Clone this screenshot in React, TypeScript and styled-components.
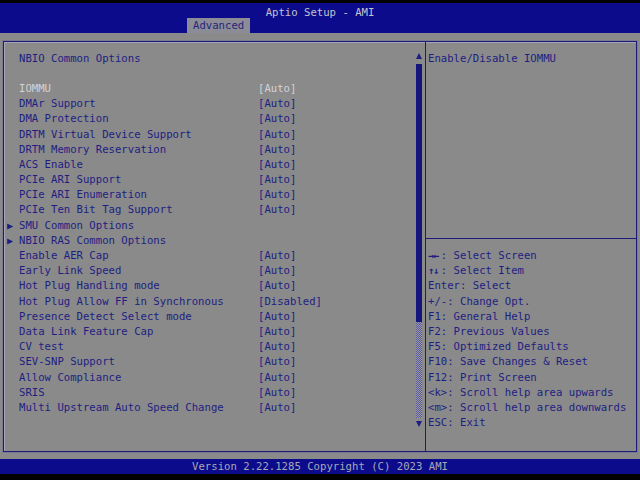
import React from "react";
import styled, { createGlobalStyle } from "styled-components";

const BLUE = "#0b0b8c";
const GRAY = "#8a8a8a";
const TEXT = "#1e1e82";
const LH = "15.2px";

const Global = createGlobalStyle`
  html, body { margin: 0; padding: 0; background: #000; }
  body { width: 640px; height: 480px; overflow: hidden; }
  * { box-sizing: border-box; }
`;

const Screen = styled.div`
  width: 640px;
  height: 480px;
  display: flex;
  flex-direction: column;
  background: #000;
  font-family: "DejaVu Sans Mono", "Liberation Mono", monospace;
  font-size: 10.63px;
  line-height: ${LH};
  color: ${TEXT};
`;

const Header = styled.div`
  margin-top: 3px;
  height: 30px;
  background: ${BLUE};
  display: flex;
  flex-direction: column;
`;

const Title = styled.div`
  height: 14px;
  padding-top: 3px;
  line-height: 14px;
  text-align: center;
  color: #c4c4cc;
`;

const TabRow = styled.div`
  flex: 1;
  display: flex;
  align-items: flex-end;
  padding-left: 187px;
`;

const Tab = styled.div`
  height: 15px;
  line-height: 16px;
  padding: 0 6px;
  background: #8c8c96;
  color: #25257a;
`;

const Body = styled.div`
  background: ${GRAY};
  padding: 8px 3px 7px 3px;
  display: flex;
  flex-direction: column;
`;

const Frame = styled.div`
  height: 411px;
  display: flex;
  border: 1px solid #1c1c78;
  box-shadow: inset 1px 1px 0 #a4a4b4, 0 0 0 1px #7a7a90;
`;

const LeftPane = styled.div`
  width: 422px;
  display: flex;
  border-right: 1px solid #1c1c78;
`;

const List = styled.div`
  flex: 1;
  padding-top: 8.6px;
  display: flex;
  flex-direction: column;
`;

const Row = styled.div<{ $selected?: boolean }>`
  display: flex;
  height: ${LH};
  white-space: pre;
  color: ${(p) => (p.$selected ? "#d2d2da" : TEXT)};
`;

const Marker = styled.span`
  width: 15px;
  padding-left: 3px;
  font-size: 10px;
`;

const Label = styled.span`
  width: 239px;
`;

const Value = styled.span``;

const Scroll = styled.div`
  width: 6px;
  margin: 11px 3px 24px 0;
  display: flex;
  flex-direction: column;
  align-items: center;
`;

const ArrowUp = styled.div`
  width: 0;
  height: 0;
  border-left: 3px solid transparent;
  border-right: 3px solid transparent;
  border-bottom: 6px solid ${TEXT};
  margin-bottom: 5px;
`;

const ArrowDown = styled.div`
  width: 0;
  height: 0;
  border-left: 3px solid transparent;
  border-right: 3px solid transparent;
  border-top: 6px solid ${TEXT};
  margin-top: 3px;
`;

const Thumb = styled.div`
  width: 6px;
  height: 258px;
  background: #15157e;
`;

const Track = styled.div`
  width: 6px;
  flex: 1;
  background-color: ${GRAY};
  background-image: repeating-conic-gradient(#5a5a9a 0 25%, #9a9aa6 0 50%);
  background-size: 2px 2px;
`;

const RightPane = styled.div`
  flex: 1;
  display: flex;
  flex-direction: column;
`;

const HelpTop = styled.div`
  height: 197px;
  padding: 8.6px 0 0 2px;
  border-bottom: 1px solid #1c1c78;
`;

const Keys = styled.div`
  padding: 9px 0 0 2px;
  display: flex;
  flex-direction: column;
`;

const KeyLine = styled.div`
  height: ${LH};
  white-space: pre;
  display: flex;
`;

const KeyArrows = styled.span`
  display: inline-block;
  width: 12.8px;
  font-weight: bold;
  font-size: 10px;
  letter-spacing: -1px;
`;

const Footer = styled.div`
  height: 15px;
  line-height: 16px;
  background: ${BLUE};
  color: #a8a8b4;
  text-align: center;
`;

type Item = { label: string; value?: string; sub?: boolean; selected?: boolean };

const items: Item[] = [
  { label: "IOMMU", value: "[Auto]", selected: true },
  { label: "DMAr Support", value: "[Auto]" },
  { label: "DMA Protection", value: "[Auto]" },
  { label: "DRTM Virtual Device Support", value: "[Auto]" },
  { label: "DRTM Memory Reservation", value: "[Auto]" },
  { label: "ACS Enable", value: "[Auto]" },
  { label: "PCIe ARI Support", value: "[Auto]" },
  { label: "PCIe ARI Enumeration", value: "[Auto]" },
  { label: "PCIe Ten Bit Tag Support", value: "[Auto]" },
  { label: "SMU Common Options", sub: true },
  { label: "NBIO RAS Common Options", sub: true },
  { label: "Enable AER Cap", value: "[Auto]" },
  { label: "Early Link Speed", value: "[Auto]" },
  { label: "Hot Plug Handling mode", value: "[Auto]" },
  { label: "Hot Plug Allow FF in Synchronous", value: "[Disabled]" },
  { label: "Presence Detect Select mode", value: "[Auto]" },
  { label: "Data Link Feature Cap", value: "[Auto]" },
  { label: "CV test", value: "[Auto]" },
  { label: "SEV-SNP Support", value: "[Auto]" },
  { label: "Allow Compliance", value: "[Auto]" },
  { label: "SRIS", value: "[Auto]" },
  { label: "Multi Upstream Auto Speed Change", value: "[Auto]" },
];

const keys: { arrows?: string; text: string }[] = [
  { arrows: "\u2192\u2190", text: ": Select Screen" },
  { arrows: "\u2191\u2193", text: ": Select Item" },
  { text: "Enter: Select" },
  { text: "+/-: Change Opt." },
  { text: "F1: General Help" },
  { text: "F2: Previous Values" },
  { text: "F5: Optimized Defaults" },
  { text: "F10: Save Changes & Reset" },
  { text: "F12: Print Screen" },
  { text: "<k>: Scroll help area upwards" },
  { text: "<m>: Scroll help area downwards" },
  { text: "ESC: Exit" },
];

export default function App() {
  return (
    <Screen>
      <Global />
      <Header>
        <Title>Aptio Setup - AMI</Title>
        <TabRow>
          <Tab>Advanced</Tab>
        </TabRow>
      </Header>
      <Body>
        <Frame>
          <LeftPane>
            <List>
              <Row>
                <Marker />
                <Label>NBIO Common Options</Label>
              </Row>
              <Row />
              {items.map((it) => (
                <Row key={it.label} $selected={it.selected}>
                  <Marker>{it.sub ? "\u25B6" : ""}</Marker>
                  <Label>{it.label}</Label>
                  {it.value && <Value>{it.value}</Value>}
                </Row>
              ))}
            </List>
            <Scroll>
              <ArrowUp />
              <Thumb />
              <Track />
              <ArrowDown />
            </Scroll>
          </LeftPane>
          <RightPane>
            <HelpTop>Enable/Disable IOMMU</HelpTop>
            <Keys>
              {keys.map((k) => (
                <KeyLine key={k.text}>
                  {k.arrows && <KeyArrows>{k.arrows}</KeyArrows>}
                  {k.text}
                </KeyLine>
              ))}
            </Keys>
          </RightPane>
        </Frame>
      </Body>
      <Footer>Version 2.22.1285 Copyright (C) 2023 AMI</Footer>
    </Screen>
  );
}
